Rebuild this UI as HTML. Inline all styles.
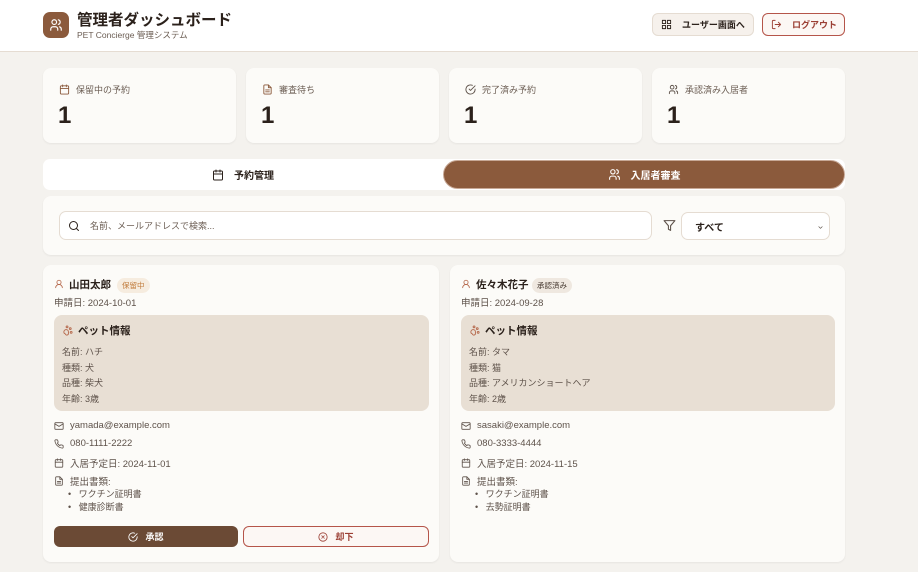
<!DOCTYPE html>
<html><head><meta charset="utf-8"><style>
*{box-sizing:border-box;margin:0;padding:0}
body{width:918px;height:572px;overflow:hidden;background:#f4f2ee;font-family:"Liberation Sans","Noto Sans CJK JP",sans-serif;color:#2b211b;position:relative}
.abs{position:absolute}
svg{fill:none;stroke-width:2;stroke-linecap:round;stroke-linejoin:round}
.hdr{left:0;top:0;width:918px;height:52px;background:#fff;border-bottom:1px solid #e5dcd2}
.card{background:#fcfbf8;border-radius:8px;box-shadow:0 1px 2px rgba(0,0,0,.06)}
.stat .lbl{position:absolute;left:16px;top:15px;font-size:9px;color:#6b5d53;display:flex;align-items:center;gap:6px}
.stat .num{position:absolute;left:15px;top:34px;font-size:24px;font-weight:bold;color:#2b211b}
.t{font-size:9.5px;color:#5e524a;position:absolute;display:flex;align-items:center;gap:6px}
</style></head><body>
<div class="abs hdr"></div>
<div class="abs" style="left:43px;top:12px;width:26px;height:26px;background:#8b5a3c;border-radius:7px"></div>
<svg class="abs" style="left:49px;top:18px" width="14" height="14" viewBox="0 0 24 24" stroke="#fff"><circle cx="9" cy="7" r="4"/><path d="M3 21v-2a4 4 0 0 1 4-4h4a4 4 0 0 1 4 4v2M16 3.1a4 4 0 0 1 0 7.8M21 21v-2a4 4 0 0 0-3-3.9"/></svg>
<div class="abs" style="left:77px;top:8px;font-size:15.5px;font-weight:bold">管理者ダッシュボード</div>
<div class="abs" style="left:77px;top:29px;font-size:8.5px;color:#6b5d53">PET Concierge 管理システム</div>
<div class="abs" style="left:652px;top:13px;width:102px;height:23px;border:1px solid #e5dcd2;background:#f6f1ec;border-radius:6px;font-size:9px;font-weight:bold;display:flex;align-items:center;padding-left:8px;gap:10px"><svg width="11" height="11" viewBox="0 0 24 24" stroke="#2b211b"><rect x="3" y="3" width="7" height="7"/><rect x="14" y="3" width="7" height="7"/><rect x="3" y="14" width="7" height="7"/><rect x="14" y="14" width="7" height="7"/></svg>ユーザー画面へ</div>
<div class="abs" style="left:762px;top:13px;width:83px;height:23px;border:1px solid #b5554a;background:#fcf7f4;border-radius:6px;font-size:9px;font-weight:bold;color:#9b3f34;display:flex;align-items:center;padding-left:8px;gap:10px"><svg width="11" height="11" viewBox="0 0 24 24" stroke="#9b3f34"><path d="M9 21H5a2 2 0 0 1-2-2V5a2 2 0 0 1 2-2h4M16 17l5-5-5-5M21 12H9"/></svg>ログアウト</div>

<div class="abs card stat" style="left:43px;top:68px;width:193px;height:75px"><div class="lbl"><svg width="11" height="11" viewBox="0 0 24 24" stroke="#8b5a3c"><rect x="3" y="4" width="18" height="18" rx="2"/><path d="M16 2v4M8 2v4M3 10h18"/></svg>保留中の予約</div><div class="num">1</div></div>
<div class="abs card stat" style="left:246px;top:68px;width:193px;height:75px"><div class="lbl"><svg width="11" height="11" viewBox="0 0 24 24" stroke="#8b5a3c"><path d="M14 2H6a2 2 0 0 0-2 2v16a2 2 0 0 0 2 2h12a2 2 0 0 0 2-2V8z"/><path d="M14 2v6h6M16 13H8M16 17H8"/></svg>審査待ち</div><div class="num">1</div></div>
<div class="abs card stat" style="left:449px;top:68px;width:193px;height:75px"><div class="lbl"><svg width="11" height="11" viewBox="0 0 24 24" stroke="#5e524a"><path d="M22 11.1V12a10 10 0 1 1-5.9-9.1"/><path d="M22 4 12 14l-3-3"/></svg>完了済み予約</div><div class="num">1</div></div>
<div class="abs card stat" style="left:652px;top:68px;width:193px;height:75px"><div class="lbl"><svg width="11" height="11" viewBox="0 0 24 24" stroke="#5e524a"><circle cx="9" cy="7" r="4"/><path d="M3 21v-2a4 4 0 0 1 4-4h4a4 4 0 0 1 4 4v2M16 3.1a4 4 0 0 1 0 7.8M21 21v-2a4 4 0 0 0-3-3.9"/></svg>承認済み入居者</div><div class="num">1</div></div>

<div class="abs" style="left:43px;top:159px;width:802px;height:31px;background:#fff;border-radius:7px"></div>
<div class="abs" style="left:43px;top:159px;width:400px;height:31px;display:flex;align-items:center;justify-content:center;gap:10px;font-size:10px;font-weight:bold"><svg width="12" height="12" viewBox="0 0 24 24" stroke="#2b211b"><rect x="3" y="4" width="18" height="18" rx="2"/><path d="M16 2v4M8 2v4M3 10h18"/></svg>予約管理</div>
<div class="abs" style="left:443px;top:160px;width:402px;height:29px;background:#8b5a3c;border-radius:15px;border:1.5px solid #c7a896;display:flex;align-items:center;justify-content:center;gap:10px;font-size:10px;font-weight:bold;color:#fff"><svg width="13" height="13" viewBox="0 0 24 24" stroke="#fff"><circle cx="9" cy="7" r="4"/><path d="M3 21v-2a4 4 0 0 1 4-4h4a4 4 0 0 1 4 4v2M16 3.1a4 4 0 0 1 0 7.8M21 21v-2a4 4 0 0 0-3-3.9"/></svg>入居者審査</div>

<div class="abs card" style="left:43px;top:196px;width:802px;height:59px"></div>
<div class="abs" style="left:59px;top:211px;width:593px;height:29px;background:#fff;border:1px solid #e5dcd2;border-radius:7px;display:flex;align-items:center;padding-left:8px;gap:10px;font-size:9px;color:#6b5d53"><svg width="12" height="12" viewBox="0 0 24 24" stroke="#2b211b"><circle cx="11" cy="11" r="8"/><path d="m21 21-4.3-4.3"/></svg>名前、メールアドレスで検索...</div>
<svg class="abs" style="left:663px;top:219px" width="13" height="13" viewBox="0 0 24 24" stroke="#5e524a"><path d="M22 3H2l8 9.5V19l4 2v-8.5z"/></svg>
<div class="abs" style="left:681px;top:212px;width:149px;height:28px;background:#fff;border:1px solid #e5dcd2;border-radius:7px;font-size:10px;font-weight:bold;display:flex;align-items:center;padding-left:13px">すべて<svg class="abs" style="right:5px;top:11px" width="7" height="7" viewBox="0 0 24 24" stroke="#5e524a" stroke-width="3"><path d="m6 9 6 6 6-6"/></svg></div>

<!-- card 1 -->
<div class="abs card" style="left:43px;top:265px;width:396px;height:297px"></div>
<svg class="abs" style="left:54px;top:279px" width="10" height="10" viewBox="0 0 24 24" stroke="#b5674a"><circle cx="12" cy="8" r="5"/><path d="M20 21a8 8 0 0 0-16 0"/></svg>
<div class="abs" style="left:69px;top:277px;font-size:10.5px;font-weight:bold">山田太郎</div>
<div class="abs" style="left:117px;top:278px;background:#f6ecdf;color:#c07a3a;font-size:7.5px;padding:2px 5px;border-radius:8px">保留中</div>
<div class="t" style="left:54px;top:295px">申請日: 2024-10-01</div>
<div class="abs" style="left:54px;top:315px;width:375px;height:96px;background:#e8dfd4;border-radius:8px"></div>
<div class="abs" style="left:62px;top:323px;font-size:10.5px;font-weight:bold;display:flex;align-items:center;gap:5px"><svg width="11" height="11" viewBox="0 0 24 24" stroke="#b5674a"><circle cx="11" cy="4" r="2"/><circle cx="18" cy="8" r="2"/><circle cx="20" cy="16" r="2"/><path d="M9 10a5 5 0 0 1 5 5v3.5a3.5 3.5 0 0 1-6.8 1.2 1.7 1.7 0 0 0-1-1A3.5 3.5 0 0 1 4 15.5 5.5 5.5 0 0 1 9 10z"/></svg>ペット情報</div>
<div class="t" style="left:62px;top:345px;font-size:9px">名前: ハチ</div>
<div class="t" style="left:62px;top:361px;font-size:9px">種類: 犬</div>
<div class="t" style="left:62px;top:376px;font-size:9px">品種: 柴犬</div>
<div class="t" style="left:62px;top:392px;font-size:9px">年齢: 3歳</div>
<div class="t" style="left:54px;top:420px"><svg width="10" height="10" viewBox="0 0 24 24" stroke="#5e524a"><rect x="2" y="4" width="20" height="16" rx="2"/><path d="m22 7-10 6L2 7"/></svg>yamada@example.com</div>
<div class="t" style="left:54px;top:438px"><svg width="10" height="10" viewBox="0 0 24 24" stroke="#5e524a"><path d="M22 16.9v3a2 2 0 0 1-2.2 2 19.8 19.8 0 0 1-8.6-3.1 19.5 19.5 0 0 1-6-6A19.8 19.8 0 0 1 2.1 4.2 2 2 0 0 1 4.1 2h3a2 2 0 0 1 2 1.7c.1 1 .4 1.9.7 2.8a2 2 0 0 1-.5 2.1L8.1 9.9a16 16 0 0 0 6 6l1.3-1.3a2 2 0 0 1 2.1-.4c.9.3 1.8.6 2.8.7a2 2 0 0 1 1.7 2z"/></svg>080-1111-2222</div>
<div class="t" style="left:54px;top:456px"><svg width="10" height="10" viewBox="0 0 24 24" stroke="#5e524a"><rect x="3" y="4" width="18" height="18" rx="2"/><path d="M16 2v4M8 2v4M3 10h18"/></svg>入居予定日: 2024-11-01</div>
<div class="t" style="left:54px;top:474px"><svg width="10" height="10" viewBox="0 0 24 24" stroke="#5e524a"><path d="M14 2H6a2 2 0 0 0-2 2v16a2 2 0 0 0 2 2h12a2 2 0 0 0 2-2V8z"/><path d="M14 2v6h6M16 13H8M16 17H8"/></svg>提出書類:</div>
<div class="t" style="left:68px;top:487px;font-size:9px">•&nbsp;&nbsp;&nbsp;ワクチン証明書</div>
<div class="t" style="left:68px;top:500px;font-size:9px">•&nbsp;&nbsp;&nbsp;健康診断書</div>
<div class="abs" style="left:54px;top:526px;width:184px;height:21px;background:#6b4a35;border-radius:6px;color:#fff;font-size:9px;font-weight:bold;display:flex;align-items:center;justify-content:center;gap:7px"><svg width="10" height="10" viewBox="0 0 24 24" stroke="#fff"><path d="M22 11.1V12a10 10 0 1 1-5.9-9.1"/><path d="M22 4 12 14l-3-3"/></svg>承認</div>
<div class="abs" style="left:243px;top:526px;width:186px;height:21px;background:#fcf7f4;border:1px solid #b5554a;border-radius:6px;color:#9b3f34;font-size:9px;font-weight:bold;display:flex;align-items:center;justify-content:center;gap:7px"><svg width="10" height="10" viewBox="0 0 24 24" stroke="#9b3f34"><circle cx="12" cy="12" r="10"/><path d="m15 9-6 6M9 9l6 6"/></svg>却下</div>

<!-- card 2 -->
<div class="abs card" style="left:450px;top:265px;width:395px;height:297px"></div>
<svg class="abs" style="left:461px;top:279px" width="10" height="10" viewBox="0 0 24 24" stroke="#b5674a"><circle cx="12" cy="8" r="5"/><path d="M20 21a8 8 0 0 0-16 0"/></svg>
<div class="abs" style="left:476px;top:277px;font-size:10.5px;font-weight:bold">佐々木花子</div>
<div class="abs" style="left:532px;top:278px;background:#efe8e0;color:#4a3d34;font-size:7.5px;padding:2px 5px;border-radius:8px">承認済み</div>
<div class="t" style="left:461px;top:295px">申請日: 2024-09-28</div>
<div class="abs" style="left:461px;top:315px;width:374px;height:96px;background:#e8dfd4;border-radius:8px"></div>
<div class="abs" style="left:469px;top:323px;font-size:10.5px;font-weight:bold;display:flex;align-items:center;gap:5px"><svg width="11" height="11" viewBox="0 0 24 24" stroke="#b5674a"><circle cx="11" cy="4" r="2"/><circle cx="18" cy="8" r="2"/><circle cx="20" cy="16" r="2"/><path d="M9 10a5 5 0 0 1 5 5v3.5a3.5 3.5 0 0 1-6.8 1.2 1.7 1.7 0 0 0-1-1A3.5 3.5 0 0 1 4 15.5 5.5 5.5 0 0 1 9 10z"/></svg>ペット情報</div>
<div class="t" style="left:469px;top:345px;font-size:9px">名前: タマ</div>
<div class="t" style="left:469px;top:361px;font-size:9px">種類: 猫</div>
<div class="t" style="left:469px;top:376px;font-size:9px">品種: アメリカンショートヘア</div>
<div class="t" style="left:469px;top:392px;font-size:9px">年齢: 2歳</div>
<div class="t" style="left:461px;top:420px"><svg width="10" height="10" viewBox="0 0 24 24" stroke="#5e524a"><rect x="2" y="4" width="20" height="16" rx="2"/><path d="m22 7-10 6L2 7"/></svg>sasaki@example.com</div>
<div class="t" style="left:461px;top:438px"><svg width="10" height="10" viewBox="0 0 24 24" stroke="#5e524a"><path d="M22 16.9v3a2 2 0 0 1-2.2 2 19.8 19.8 0 0 1-8.6-3.1 19.5 19.5 0 0 1-6-6A19.8 19.8 0 0 1 2.1 4.2 2 2 0 0 1 4.1 2h3a2 2 0 0 1 2 1.7c.1 1 .4 1.9.7 2.8a2 2 0 0 1-.5 2.1L8.1 9.9a16 16 0 0 0 6 6l1.3-1.3a2 2 0 0 1 2.1-.4c.9.3 1.8.6 2.8.7a2 2 0 0 1 1.7 2z"/></svg>080-3333-4444</div>
<div class="t" style="left:461px;top:456px"><svg width="10" height="10" viewBox="0 0 24 24" stroke="#5e524a"><rect x="3" y="4" width="18" height="18" rx="2"/><path d="M16 2v4M8 2v4M3 10h18"/></svg>入居予定日: 2024-11-15</div>
<div class="t" style="left:461px;top:474px"><svg width="10" height="10" viewBox="0 0 24 24" stroke="#5e524a"><path d="M14 2H6a2 2 0 0 0-2 2v16a2 2 0 0 0 2 2h12a2 2 0 0 0 2-2V8z"/><path d="M14 2v6h6M16 13H8M16 17H8"/></svg>提出書類:</div>
<div class="t" style="left:475px;top:487px;font-size:9px">•&nbsp;&nbsp;&nbsp;ワクチン証明書</div>
<div class="t" style="left:475px;top:500px;font-size:9px">•&nbsp;&nbsp;&nbsp;去勢証明書</div>
</body></html>
